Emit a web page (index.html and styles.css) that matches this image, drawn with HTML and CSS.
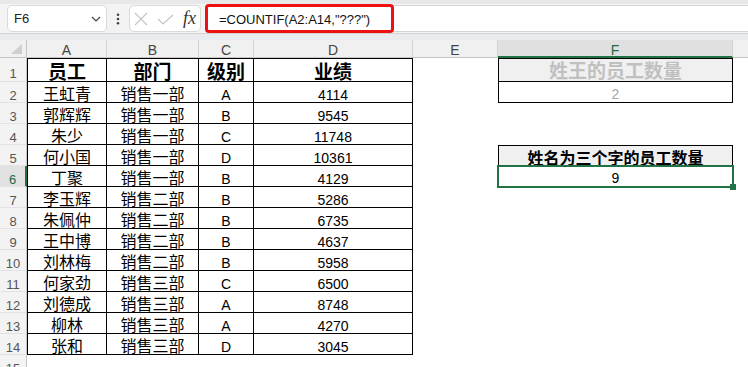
FILE: index.html
```html
<!DOCTYPE html>
<html>
<head>
<meta charset="utf-8">
<link rel="stylesheet" href="styles.css">
</head>
<body>
<div class="app">
  <div class="fbar">
    <div class="namebox">
      <span class="nb-text">F6</span>
      <svg class="chev" width="10" height="6" viewBox="0 0 10 6"><polyline points="1,1 5,5 9,1" fill="none" stroke="#444" stroke-width="1.2"/></svg>
    </div>
    <div class="dots">
      <svg width="4" height="12" viewBox="0 0 4 12"><circle cx="2" cy="1.8" r="1.3" fill="#444"/><circle cx="2" cy="6" r="1.3" fill="#444"/><circle cx="2" cy="10.2" r="1.3" fill="#444"/></svg>
    </div>
    <div class="fxbox">
      <svg class="ico-x" width="14" height="14" viewBox="0 0 14 14"><path d="M1 1L13 13M13 1L1 13" stroke="#c4c4c4" stroke-width="1.2" fill="none"/></svg>
      <svg class="ico-ok" width="17" height="11" viewBox="0 0 17 11"><polyline points="1,5 6,10 16,1" stroke="#c4c4c4" stroke-width="1.2" fill="none"/></svg>
      <span class="fx">fx</span>
    </div>
    <div class="formula">
      <div class="hl">=COUNTIF(A2:A14,"???")</div>
    </div>
  </div>
  <div class="band"></div>
  <div class="sheet">
    <div class="row hdr">
      <div class="cell rh corner"><svg width="12" height="11" viewBox="0 0 12 11"><polygon points="11,0 11,10 0,10" fill="#cfcfcf"/></svg></div>
      <div class="cell ch ca">A</div>
      <div class="cell ch cb">B</div>
      <div class="cell ch cc">C</div>
      <div class="cell ch cd">D</div>
      <div class="cell ch ce">E</div>
      <div class="cell ch cf sel">F</div>
      <div class="cell ch cg"></div>
    </div>
    <div class="row r1">
      <div class="cell rh">1</div>
      <div class="cell t ca th">员工</div>
      <div class="cell t cb th">部门</div>
      <div class="cell t cc th">级别</div>
      <div class="cell t cd th">业绩</div>
      <div class="cell ce"></div>
      <div class="cell cf fbox f1">姓王的员工数量</div>
      <div class="cell cg"></div>
    </div>
    <div class="row">
      <div class="cell rh">2</div>
      <div class="cell t ca zh">王虹青</div>
      <div class="cell t cb zh">销售一部</div>
      <div class="cell t cc en">A</div>
      <div class="cell t cd en">4114</div>
      <div class="cell ce"></div>
      <div class="cell cf fbox2 f2">2</div>
      <div class="cell cg"></div>
    </div>
    <div class="row">
      <div class="cell rh">3</div>
      <div class="cell t ca zh">郭辉辉</div>
      <div class="cell t cb zh">销售一部</div>
      <div class="cell t cc en">B</div>
      <div class="cell t cd en">9545</div>
      <div class="cell ce"></div>
      <div class="cell cf"></div>
      <div class="cell cg"></div>
    </div>
    <div class="row">
      <div class="cell rh">4</div>
      <div class="cell t ca zh">朱少</div>
      <div class="cell t cb zh">销售一部</div>
      <div class="cell t cc en">C</div>
      <div class="cell t cd en">11748</div>
      <div class="cell ce"></div>
      <div class="cell cf"></div>
      <div class="cell cg"></div>
    </div>
    <div class="row">
      <div class="cell rh">5</div>
      <div class="cell t ca zh">何小国</div>
      <div class="cell t cb zh">销售一部</div>
      <div class="cell t cc en">D</div>
      <div class="cell t cd en">10361</div>
      <div class="cell ce"></div>
      <div class="cell cf fbox f5">姓名为三个字的员工数量</div>
      <div class="cell cg"></div>
    </div>
    <div class="row">
      <div class="cell rh rsel">6</div>
      <div class="cell t ca zh">丁聚</div>
      <div class="cell t cb zh">销售一部</div>
      <div class="cell t cc en">B</div>
      <div class="cell t cd en">4129</div>
      <div class="cell ce"></div>
      <div class="cell cf f6">9<span class="selbox"><span class="handle"></span></span></div>
      <div class="cell cg"></div>
    </div>
    <div class="row">
      <div class="cell rh">7</div>
      <div class="cell t ca zh">李玉辉</div>
      <div class="cell t cb zh">销售二部</div>
      <div class="cell t cc en">B</div>
      <div class="cell t cd en">5286</div>
      <div class="cell ce"></div>
      <div class="cell cf"></div>
      <div class="cell cg"></div>
    </div>
    <div class="row">
      <div class="cell rh">8</div>
      <div class="cell t ca zh">朱佩仲</div>
      <div class="cell t cb zh">销售二部</div>
      <div class="cell t cc en">B</div>
      <div class="cell t cd en">6735</div>
      <div class="cell ce"></div>
      <div class="cell cf"></div>
      <div class="cell cg"></div>
    </div>
    <div class="row">
      <div class="cell rh">9</div>
      <div class="cell t ca zh">王中博</div>
      <div class="cell t cb zh">销售二部</div>
      <div class="cell t cc en">B</div>
      <div class="cell t cd en">4637</div>
      <div class="cell ce"></div>
      <div class="cell cf"></div>
      <div class="cell cg"></div>
    </div>
    <div class="row">
      <div class="cell rh">10</div>
      <div class="cell t ca zh">刘林梅</div>
      <div class="cell t cb zh">销售二部</div>
      <div class="cell t cc en">B</div>
      <div class="cell t cd en">5958</div>
      <div class="cell ce"></div>
      <div class="cell cf"></div>
      <div class="cell cg"></div>
    </div>
    <div class="row">
      <div class="cell rh">11</div>
      <div class="cell t ca zh">何家劲</div>
      <div class="cell t cb zh">销售三部</div>
      <div class="cell t cc en">C</div>
      <div class="cell t cd en">6500</div>
      <div class="cell ce"></div>
      <div class="cell cf"></div>
      <div class="cell cg"></div>
    </div>
    <div class="row">
      <div class="cell rh">12</div>
      <div class="cell t ca zh">刘德成</div>
      <div class="cell t cb zh">销售三部</div>
      <div class="cell t cc en">A</div>
      <div class="cell t cd en">8748</div>
      <div class="cell ce"></div>
      <div class="cell cf"></div>
      <div class="cell cg"></div>
    </div>
    <div class="row">
      <div class="cell rh">13</div>
      <div class="cell t ca zh">柳林</div>
      <div class="cell t cb zh">销售三部</div>
      <div class="cell t cc en">A</div>
      <div class="cell t cd en">4270</div>
      <div class="cell ce"></div>
      <div class="cell cf"></div>
      <div class="cell cg"></div>
    </div>
    <div class="row">
      <div class="cell rh">14</div>
      <div class="cell t ca zh">张和</div>
      <div class="cell t cb zh">销售三部</div>
      <div class="cell t cc en">D</div>
      <div class="cell t cd en">3045</div>
      <div class="cell ce"></div>
      <div class="cell cf"></div>
      <div class="cell cg"></div>
    </div>
    <div class="row">
      <div class="cell rh">15</div>
      <div class="cell ca"></div>
      <div class="cell cb"></div>
      <div class="cell cc"></div>
      <div class="cell cd"></div>
      <div class="cell ce"></div>
      <div class="cell cf"></div>
      <div class="cell cg"></div>
    </div>
  </div>
</div>
</body>
</html>
```

FILE: styles.css
```css
* { box-sizing: border-box; margin: 0; padding: 0; }
html, body { width: 748px; height: 367px; overflow: hidden; background: #fff; }
body { font-family: "Liberation Sans", "Noto Sans CJK SC", sans-serif; color: #000; }

.fbar {
  display: flex;
  align-items: flex-start;
  height: 33px;
  padding: 5px 0 0 7px;
  background: linear-gradient(#e6e8ea 0, #e6e8ea 4px, #f3f3f3 4px);
}
.namebox {
  width: 100px;
  height: 27px;
  background: #fff;
  border: 1px solid #dadada;
  border-radius: 5px;
  display: flex;
  align-items: center;
  justify-content: space-between;
  padding: 0 5px 0 6px;
  font-size: 13px;
  color: #222;
}
.chev { margin-top: 1px; }
.dots {
  width: 22px;
  height: 27px;
  display: flex;
  align-items: center;
  justify-content: center;
  padding-left: 0;
}
.fxbox {
  width: 72px;
  height: 27px;
  background: #fff;
  border: 1px solid #dadada;
  border-radius: 5px;
  display: flex;
  align-items: center;
  padding-left: 4px;
}
.ico-x { margin-top: 1px; }
.ico-ok { margin-left: 9px; margin-top: 1px; }
.fx {
  margin-left: 9px;
  font-family: "Liberation Serif", serif;
  font-style: italic;
  font-size: 18px;
  color: #333;
  line-height: 1;
  margin-top: -2px;
}
.formula {
  flex: 1;
  height: 27px;
  margin-left: 4px;
  background: #fff;
  border-top: 1px solid #d4d4d4;
  border-bottom: 1px solid #d4d4d4;
}
.hl {
  width: 189px;
  height: 29px;
  margin-top: -2px;
  border: 3px solid #ee1111;
  border-radius: 4px;
  padding: 5px 0 0 11px;
  font-size: 13px;
  line-height: 15px;
  color: #111;
  white-space: nowrap;
}
.band {
  height: 7px;
  background: #e9ebee;
  border-top: 1px solid #d2d2d2;
}

.sheet { display: flex; flex-direction: column; }
.row { display: flex; height: 21px; flex: none; }
.row.hdr { height: 18px; }
.row.r1 { height: 24px; }

.cell {
  flex: none;
  display: flex;
  align-items: center;
  justify-content: center;
  white-space: nowrap;
  overflow: visible;
  line-height: 1;
  position: relative;
}
.rh { width: 27px; }
.ca { width: 80px; }
.cb { width: 92px; }
.cc { width: 55px; }
.cd { width: 159px; }
.ce { width: 85px; }
.cf { width: 235px; }
.cg { flex: 1; }

.ch {
  background: #f0f0f0;
  border-right: 1px solid #d2d2d2;
  border-bottom: 1px solid #c6c6c6;
  font-size: 14px;
  color: #444;
  padding-top: 2px;
}
.ch.cg { border-right: none; }
.ch.sel {
  background: #e0e0e0;
  color: #1e6b45;
  border-bottom: 2px solid #217346;
  padding-top: 3px;
}
.corner {
  background: #f0f0f0;
  border-right: 1px solid #c6c6c6;
  border-bottom: 1px solid #c6c6c6;
  justify-content: flex-end;
  align-items: flex-end;
  padding: 0 3px 2px 0;
}

.rh:not(.corner) {
  background: #f3f3f3;
  border-right: 1px solid #c6c6c6;
  border-bottom: 1px solid #e2e2e2;
  font-size: 13px;
  color: #555;
  padding-top: 6px;
}
.r1 .rh { padding-top: 8px; }
.rh.rsel {
  background: #e1e1e1;
  border-right: 2px solid #217346;
  color: #1e6b45;
}

.t {
  border-right: 1px solid #000;
  border-bottom: 1px solid #000;
}
.t.ca { border-left: 1px solid #000; }
.r1 .t { border-top: 1px solid #000; }

.th { font-size: 19px; font-weight: 700; padding-top: 5px; }
.zh { font-size: 16px; padding-top: 6px; }
.en { font-size: 14px; padding-top: 6px; }

.fbox {
  border: 1px solid #000;
  background: #f0f0f0;
  font-weight: 700;
}
.fbox2 {
  border: 1px solid #000;
  border-top: none;
}
.f1 { font-size: 19px; color: #c0c0c0; padding-top: 2px; }
.f2 { font-size: 14px; color: #a6a6a6; padding-top: 4px; }
.f5 { font-size: 16px; padding-top: 5px; border-bottom: none; }
.f6 { font-size: 14px; padding-top: 3px; }
.selbox {
  position: absolute;
  left: -1px;
  top: -1px;
  right: -1px;
  bottom: -1px;
  border: 2px solid #217346;
}
.handle {
  position: absolute;
  right: -4px;
  bottom: -4px;
  width: 6px;
  height: 6px;
  background: #217346;
}
```
